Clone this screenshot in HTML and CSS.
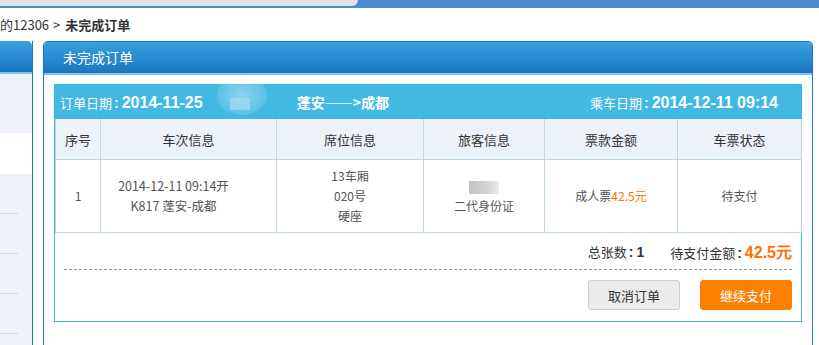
FILE: index.html
```html
<!DOCTYPE html>
<html lang="zh-CN">
<head>
    <meta charset="UTF-8">
    <title>未完成订单</title>
    <link rel="stylesheet" href="styles.css">
</head>
<body>
    <div class="topbar">
        <div class="topbar-grey"></div>
        <div class="topbar-blue"></div>
    </div>
    <div class="crumb">
        <span class="crumb-home">的12306</span>
        <span class="crumb-sep">&gt;</span>
        <b>未完成订单</b>
    </div>
    <div class="content">
        <div class="side">
            <div class="side-head"></div>
            <div class="side-body">
                <div class="side-gap"></div>
                <div class="side-white"></div>
                <div class="side-line"></div>
                <div class="side-line"></div>
                <div class="side-line"></div>
                <div class="side-line"></div>
            </div>
        </div>
        <div class="panel">
            <div class="panel-head">未完成订单</div>
            <div class="panel-body">
                <div class="order">
                    <div class="order-head">
                        <span class="order-date">订单日期<b class="colon">:</b><b class="num">2014-11-25</b></span>
                        <span class="order-route">蓬安——&gt;成都</span>
                        <span class="order-ride">乘车日期<b class="colon">:</b><b class="num">2014-12-11 09:14</b></span>
                        <span class="blur-spot"></span>
                    </div>
                    <table class="tickets">
                        <tr>
                            <th class="c1">序号</th>
                            <th class="c2">车次信息</th>
                            <th class="c3">席位信息</th>
                            <th class="c4">旅客信息</th>
                            <th class="c5">票款金额</th>
                            <th class="c6">车票状态</th>
                        </tr>
                        <tr>
                            <td>1</td>
                            <td class="train">2014-12-11 09:14开<br>K817 蓬安-成都</td>
                            <td>13车厢<br>020号<br>硬座</td>
                            <td><span class="name-blur"></span><br>二代身份证</td>
                            <td>成人票<span class="price">42.5元</span></td>
                            <td>待支付</td>
                        </tr>
                    </table>
                    <div class="summary">
                        <span>总张数<b class="colon">:</b><b class="count">1</b></span>
                        <span>待支付金额<b class="colon">:</b><b class="total">42.5元</b></span>
                    </div>
                    <div class="actions">
                        <button class="btn btn-cancel">取消订单</button>
                        <button class="btn btn-pay">继续支付</button>
                    </div>
                </div>
            </div>
        </div>
    </div>
</body>
</html>
```

FILE: styles.css
```css
body {
    margin: 0;
    width: 819px;
    height: 345px;
    overflow: hidden;
    background-color: #fff;
    font-family: "Noto Sans CJK SC", "Liberation Sans", sans-serif;
    font-size: 12px;
    color: #333;
}

.topbar {
    display: flex;
    height: 8px;
    background-color: #4a8ccc;
}

.topbar-grey {
    width: 358px;
    height: 6px;
    background-color: #e1e1e1;
    border-bottom-right-radius: 8px;
}

.topbar-blue {
    flex: 1;
}

.crumb {
    height: 33px;
    line-height: 34px;
    font-size: 13px;
    color: #333;
    white-space: nowrap;
}

.crumb-sep {
    margin: 0 2px 0 1px;
}

.content {
    display: flex;
    gap: 10px;
}

.side {
    width: 32px;
    height: 304px;
    border-right: 1px solid #1c78c0;
}

.side-head {
    height: 31px;
    background: linear-gradient(#3a9fe0, #1a76bf);
    border-top-right-radius: 5px;
    border-bottom: 2px solid #7cc6ee;
}

.side-body {
    height: 271px;
    background-color: #edf1f8;
}

.side-gap {
    height: 59px;
}

.side-white {
    height: 41px;
    background-color: #fff;
}

.side-line {
    width: 18px;
    height: 1px;
    margin-top: 39px;
    background-color: #d8d8d8;
}

.panel {
    width: 768px;
    height: 310px;
    border: 1px solid #1c78c0;
    border-bottom: none;
    border-radius: 5px 5px 0 0;
}

.panel-head {
    height: 31px;
    line-height: 31px;
    padding-left: 19px;
    background: linear-gradient(#3a9fe0, #1a76bf);
    border-radius: 4px 4px 0 0;
    border-bottom: 2px solid #7cc6ee;
    color: #fff;
    font-size: 14px;
}

.panel-body {
    padding: 9px 10px;
}

.order {
    border: 1px solid #3cb8e4;
    height: 236px;
}

.order-head {
    position: relative;
    display: flex;
    align-items: center;
    height: 34px;
    padding: 0 23px 0 5px;
    background-color: #42b9e2;
    color: #fff;
    font-size: 13px;
}

.colon {
    margin: 0 3px 0 2px;
    font-family: "Liberation Sans", sans-serif;
    font-size: 14px;
}

.num {
    font-family: "Liberation Sans", sans-serif;
    font-size: 16px;
}

.order-route {
    margin-left: 94px;
    font-size: 14px;
    font-weight: bold;
}

.order-ride {
    margin-left: auto;
}

.blur-spot {
    position: absolute;
    left: 162px;
    top: -10px;
    width: 50px;
    height: 40px;
    border-radius: 50%;
    background: radial-gradient(rgba(255, 255, 255, 0.4), rgba(255, 255, 255, 0));
}

.blur-spot::after {
    content: "";
    position: absolute;
    left: 13px;
    top: 23px;
    width: 20px;
    height: 12px;
    background-color: rgba(170, 222, 242, 0.6);
}

.tickets {
    width: 747px;
    border-collapse: collapse;
    text-align: center;
}

.tickets th,
.tickets td {
    border: 1px solid #bcd8e4;
    padding: 0;
}

.tickets tr:first-child th {
    border-top: none;
}

.tickets th {
    height: 40px;
    background-color: #edf1f8;
    font-weight: normal;
    font-size: 13px;
    color: #333;
}

.tickets td {
    height: 72px;
    line-height: 20px;
    color: #555;
}

.tickets td.train {
    padding-right: 30px;
    font-size: 12.5px;
}

.c1 { width: 44px; }
.c2 { width: 175px; }
.c3 { width: 146px; }
.c4 { width: 120px; }
.c5 { width: 132px; }

.name-blur {
    display: inline-block;
    width: 30px;
    height: 13px;
    vertical-align: middle;
    background: linear-gradient(90deg, #c4c4c4, #d2d2d2 60%, #ececec);
}

.price {
    color: #ff7200;
}

.summary {
    display: flex;
    justify-content: flex-end;
    align-items: center;
    gap: 26px;
    height: 36px;
    margin: 0 9px;
    border-bottom: 1px dashed #999;
    font-size: 13px;
    color: #333;
}

.count {
    font-family: "Liberation Sans", sans-serif;
    font-size: 14px;
}

.total {
    font-family: "Liberation Sans", sans-serif;
    font-size: 16px;
    color: #ff7200;
}

.actions {
    display: flex;
    justify-content: flex-end;
    gap: 20px;
    padding: 10px 9px 0;
}

.btn {
    width: 92px;
    height: 30px;
    border-radius: 3px;
    font-family: "Noto Sans CJK SC", sans-serif;
    font-size: 13px;
    cursor: pointer;
}

.btn-cancel {
    background-color: #ebebeb;
    border: 1px solid #cfcfcf;
    color: #333;
}

.btn-pay {
    background-color: #ff8000;
    border: 1px solid #ff8000;
    color: #fff;
}
```
